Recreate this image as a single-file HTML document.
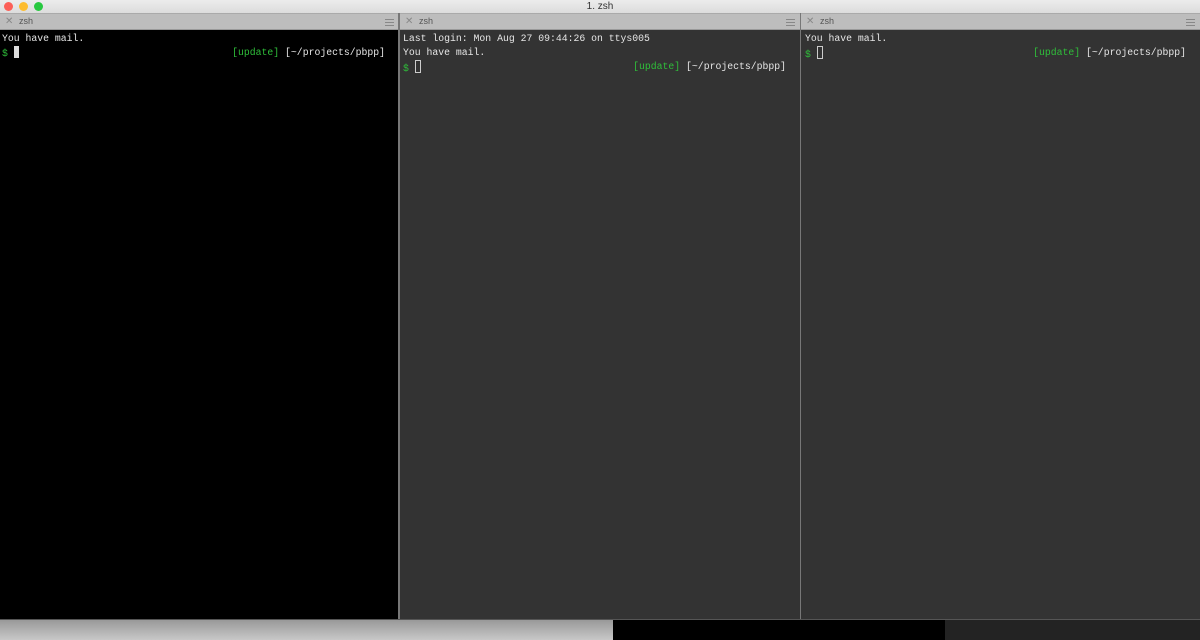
<!DOCTYPE html>
<html><head><style>
body{margin:0;width:1200px;height:640px;overflow:hidden;background:#fff;font-family:"Liberation Sans",sans-serif;position:relative}
.title{position:absolute;left:0;top:0;width:1200px;height:13px;background:linear-gradient(#ececec,#dcdcdc);font-size:10px;color:#333;text-align:center;line-height:13px}
.dot{position:absolute;top:2px;width:9px;height:9px;border-radius:50%}
.pane{position:absolute;top:13px;height:606px;overflow:hidden}
.tab{height:15px;background:#bdbdbd;border-top:1px solid #aaa;border-bottom:1px solid #999;font-size:9px;color:#555;line-height:15px;position:relative}
.tab .x{position:absolute;left:5px;color:#888;font-size:10px}
.tab .n{position:absolute;left:19px}
.tab .m{position:absolute;right:5px;top:5px;width:9px;height:5px;border-top:1px solid #888;border-bottom:1px solid #888}
.tab .m:after{content:"";position:absolute;left:0;right:0;top:2px;border-top:1px solid #888}
.term{font-family:"Liberation Mono",monospace;font-size:9.8px;line-height:14px;color:#e6e6e6;padding:2px 0 0 2px;position:relative}
.g{color:#2fbf3a}.w{color:#e6e6e6}
.rp{position:absolute;right:14px;white-space:pre}
.cur{display:inline-block;width:5px;height:12px;vertical-align:-2px}
</style></head><body>
<div class="title">1. zsh</div>
<div class="dot" style="left:4px;background:#fc5f57"></div>
<div class="dot" style="left:19px;background:#fdbc2e"></div>
<div class="dot" style="left:34px;background:#28c840"></div>

<div class="pane" style="left:0;width:399px;background:#000">
<div class="tab"><span class="x">✕</span><span class="n">zsh</span><span class="m"></span></div>
<div class="term">You have mail.<br><span class="g">$</span> <span class="cur" style="background:#ddd"></span><span class="rp" style="top:16px"><span class="g">[update]</span> [~/projects/pbpp]</span></div>
</div>
<div style="position:absolute;left:398px;top:13px;width:2px;height:606px;background:#777"></div>
<div class="pane" style="left:400px;width:400px;background:#333">
<div class="tab"><span class="x">✕</span><span class="n">zsh</span><span class="m"></span></div>
<div class="term" style="padding-left:3px">Last login: Mon Aug 27 09:44:26 on ttys005<br>You have mail.<br><span class="g">$</span> <span class="cur" style="border:1px solid #ccc;width:4px;height:11px"></span><span class="rp" style="top:30px"><span class="g">[update]</span> [~/projects/pbpp]</span></div>
</div>
<div style="position:absolute;left:800px;top:13px;width:1px;height:606px;background:#777"></div>
<div class="pane" style="left:801px;width:399px;background:#333">
<div class="tab"><span class="x">✕</span><span class="n">zsh</span><span class="m"></span></div>
<div class="term" style="padding-left:4px">You have mail.<br><span class="g">$</span> <span class="cur" style="border:1px solid #ccc;width:4px;height:11px"></span><span class="rp" style="top:16px"><span class="g">[update]</span> [~/projects/pbpp]</span></div>
</div>
<div style="position:absolute;left:0;top:619px;width:1200px;height:1px;background:#555"></div>
<div style="position:absolute;left:0;top:620px;width:613px;height:20px;background:linear-gradient(#999,#c8c8c8)"></div>
<div style="position:absolute;left:613px;top:620px;width:332px;height:20px;background:#000"></div>
<div style="position:absolute;left:945px;top:620px;width:255px;height:20px;background:#232323"></div>
</body></html>
